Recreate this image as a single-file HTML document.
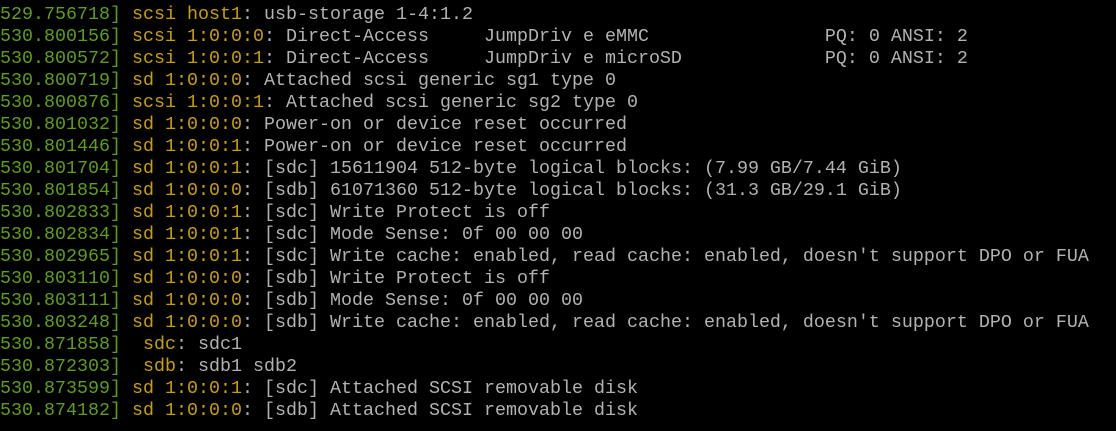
<!DOCTYPE html>
<html><head><meta charset="utf-8"><style>
html,body{margin:0;padding:0;background:#000;width:1116px;height:431px;overflow:hidden}
#t{position:absolute;left:0;top:4px;font-family:"Liberation Mono","DejaVu Sans Mono",monospace;font-size:18.33px;line-height:22px;white-space:pre;color:#b2b2b2}
.g{color:#5f9e16}.y{color:#c8a000}
</style></head><body><div id="t"><div><span class="g">529.756718]</span> <span class="y">scsi host1</span>: usb-storage 1-4:1.2</div><div><span class="g">530.800156]</span> <span class="y">scsi 1:0:0:0</span>: Direct-Access     JumpDriv e eMMC                PQ: 0 ANSI: 2</div><div><span class="g">530.800572]</span> <span class="y">scsi 1:0:0:1</span>: Direct-Access     JumpDriv e microSD             PQ: 0 ANSI: 2</div><div><span class="g">530.800719]</span> <span class="y">sd 1:0:0:0</span>: Attached scsi generic sg1 type 0</div><div><span class="g">530.800876]</span> <span class="y">scsi 1:0:0:1</span>: Attached scsi generic sg2 type 0</div><div><span class="g">530.801032]</span> <span class="y">sd 1:0:0:0</span>: Power-on or device reset occurred</div><div><span class="g">530.801446]</span> <span class="y">sd 1:0:0:1</span>: Power-on or device reset occurred</div><div><span class="g">530.801704]</span> <span class="y">sd 1:0:0:1</span>: [sdc] 15611904 512-byte logical blocks: (7.99 GB/7.44 GiB)</div><div><span class="g">530.801854]</span> <span class="y">sd 1:0:0:0</span>: [sdb] 61071360 512-byte logical blocks: (31.3 GB/29.1 GiB)</div><div><span class="g">530.802833]</span> <span class="y">sd 1:0:0:1</span>: [sdc] Write Protect is off</div><div><span class="g">530.802834]</span> <span class="y">sd 1:0:0:1</span>: [sdc] Mode Sense: 0f 00 00 00</div><div><span class="g">530.802965]</span> <span class="y">sd 1:0:0:1</span>: [sdc] Write cache: enabled, read cache: enabled, doesn't support DPO or FUA</div><div><span class="g">530.803110]</span> <span class="y">sd 1:0:0:0</span>: [sdb] Write Protect is off</div><div><span class="g">530.803111]</span> <span class="y">sd 1:0:0:0</span>: [sdb] Mode Sense: 0f 00 00 00</div><div><span class="g">530.803248]</span> <span class="y">sd 1:0:0:0</span>: [sdb] Write cache: enabled, read cache: enabled, doesn't support DPO or FUA</div><div><span class="g">530.871858]</span>  <span class="y">sdc</span>: sdc1</div><div><span class="g">530.872303]</span>  <span class="y">sdb</span>: sdb1 sdb2</div><div><span class="g">530.873599]</span> <span class="y">sd 1:0:0:1</span>: [sdc] Attached SCSI removable disk</div><div><span class="g">530.874182]</span> <span class="y">sd 1:0:0:0</span>: [sdb] Attached SCSI removable disk</div></div></body></html>
